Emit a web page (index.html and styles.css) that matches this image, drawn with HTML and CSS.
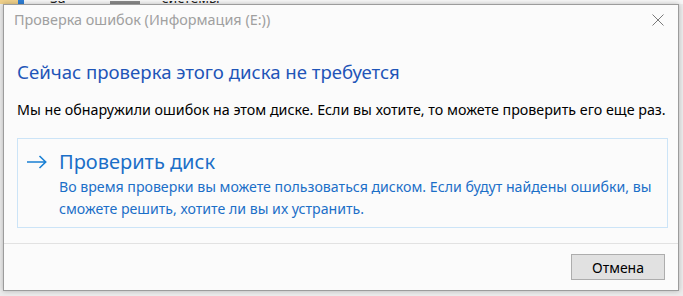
FILE: index.html
```html
<!DOCTYPE html>
<html lang="ru">
<head>
    <meta charset="UTF-8">
    <title>Проверка ошибок</title>
    <link rel="stylesheet" href="styles.css">
</head>
<body>
    <div class="desktop">
        <div class="explorer-strip">
            <span class="strip-folder"></span>
            <span class="strip-accent"></span>
            <span class="strip-text strip-sa">Sa</span>
            <span class="strip-icon"></span>
            <span class="strip-text strip-sys">системы</span>
        </div>
    </div>

    <div class="dialog">
        <div class="titlebar">
            <span class="title">Проверка ошибок (Информация (E:))</span>
            <svg class="close" width="12" height="12" viewBox="0 0 12 12">
                <path d="M0.5 0.5 L11.5 11.5 M11.5 0.5 L0.5 11.5" stroke="#7a7a7a" stroke-width="1" fill="none"/>
            </svg>
        </div>
        <div class="content">
            <h1 class="instruction">Сейчас проверка этого диска не требуется</h1>
            <p class="message">Мы не обнаружили ошибок на этом диске. Если вы хотите, то можете проверить его еще раз.</p>
            <div class="command-link">
                <svg class="arrow" width="20" height="14" viewBox="0 0 20 14">
                    <path d="M0 7 H18.5 M12.5 1 L18.7 7 L12.5 13" stroke="#1a80d4" stroke-width="1.6" fill="none"/>
                </svg>
                <div class="command-text">
                    <div class="command-title">Проверить диск</div>
                    <div class="command-desc">Во время проверки вы можете пользоваться диском. Если будут найдены ошибки, вы сможете решить, хотите ли вы их устранить.</div>
                </div>
            </div>
        </div>
        <div class="footer">
            <button class="cancel-btn">Отмена</button>
        </div>
    </div>
</body>
</html>
```

FILE: styles.css
```css
body {
    margin: 0;
    width: 683px;
    height: 296px;
    overflow: hidden;
    background-color: #e9e9e9;
    font-family: 'Noto Sans', 'Open Sans', sans-serif;
    position: relative;
}
.desktop {
    height: 296px;
    background-color: #ececec;
}
.explorer-strip {
    height: 4px;
    display: flex;
    align-items: flex-end;
    background-color: #f7f7f7;
    overflow: hidden;
    position: relative;
}
.strip-folder {
    width: 18px;
    height: 4px;
    background-color: #efd08a;
}
.strip-accent {
    width: 6px;
    height: 4px;
    background-color: #2f7fd6;
}
.strip-text {
    font-size: 14px;
    line-height: 14px;
    color: #222;
    align-self: flex-end;
    margin-bottom: -1px;
    height: 4px;
    overflow: hidden;
    display: flex;
    align-items: flex-end;
}
.strip-sa {
    margin-left: 26px;
}
.strip-icon {
    width: 30px;
    height: 3px;
    margin-left: 44px;
    background-color: #8a8a8a;
}
.strip-sys {
    margin-left: 22px;
}
.dialog {
    position: absolute;
    left: 3px;
    top: 4px;
    width: 676px;
    height: 287px;
    box-sizing: border-box;
    border: 1px solid #9c9c9c;
    background-color: #fbfbfb;
    box-shadow: 0 0 5px rgba(0,0,0,0.25);
    display: flex;
    flex-direction: column;
}
.titlebar {
    height: 32px;
    display: flex;
    align-items: center;
    justify-content: space-between;
    padding: 0 14px 2px 10px;
}
.title {
    font-size: 14.4px;
    color: #a0a0a0;
    line-height: 30px;
}
.close {
    display: block;
}
.content {
    padding: 0 10px 0 13px;
}
.instruction {
    margin: 22px 0 0 0;
    font-size: 18.6px;
    font-weight: normal;
    line-height: 26px;
    color: #1f55b8;
}
.message {
    margin: 15px 0 0 0;
    font-size: 14.27px;
    line-height: 20px;
    color: #000;
}
.command-link {
    margin-top: 18px;
    width: 651px;
    height: 90px;
    box-sizing: border-box;
    border: 1px solid #cce4f7;
    padding: 10px 10px 7px 9px;
    display: flex;
    gap: 12px;
}
.arrow {
    display: block;
    margin-top: 6px;
    flex-shrink: 0;
}
.command-title {
    font-size: 20px;
    line-height: 26px;
    color: #1b6fc8;
}
.command-desc {
    margin-top: 1px;
    font-size: 14.15px;
    line-height: 22px;
    color: #1b6fc8;
}
.footer {
    margin-top: 15px;
    border-top: 1px solid #e2e2e2;
    padding: 10px 13px 11px 0;
    display: flex;
    justify-content: flex-end;
}
.cancel-btn {
    width: 94px;
    height: 26px;
    border: 1px solid #adadad;
    background-color: #e1e1e1;
    font-family: 'Noto Sans', 'Open Sans', sans-serif;
    font-size: 14px;
    color: #000;
    padding: 0;
}
```
